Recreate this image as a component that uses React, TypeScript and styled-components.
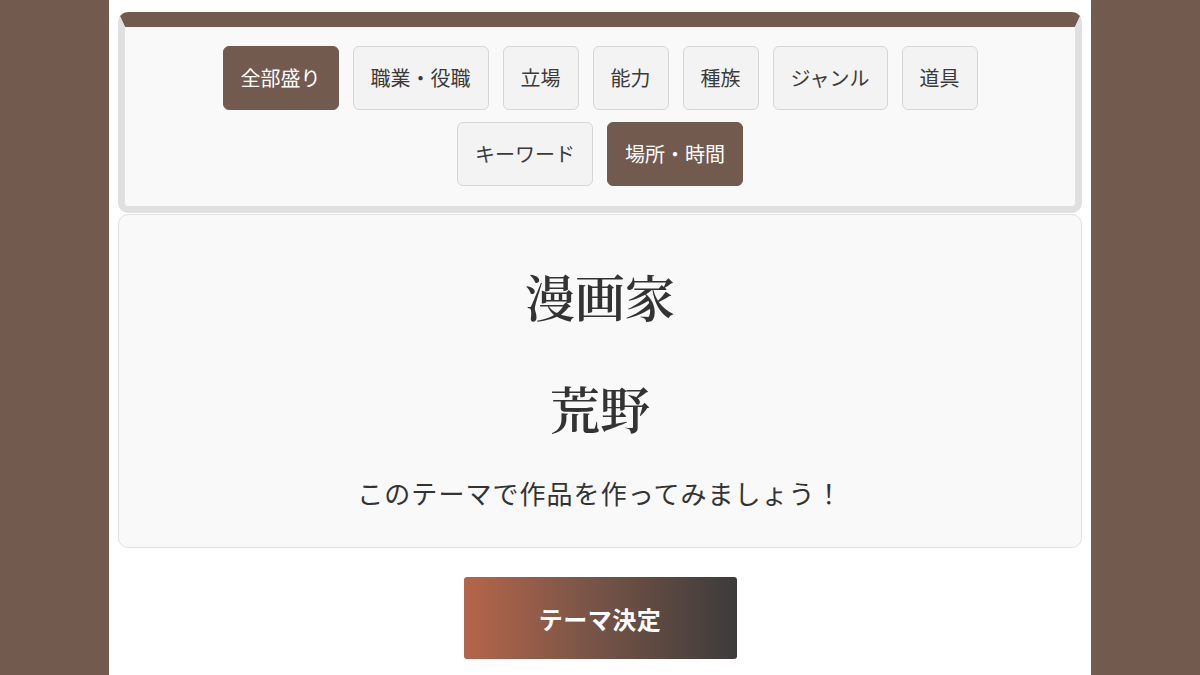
import React, { useState } from "react";
import styled, { createGlobalStyle, css } from "styled-components";

const GlobalStyle = createGlobalStyle`
  html, body {
    margin: 0;
    padding: 0;
    background: #725a4f;
  }
  body {
    font-family: "Noto Sans CJK JP", "Noto Sans", sans-serif;
    color: #333;
  }
`;

const Page = styled.div`
  display: flex;
  justify-content: center;
  min-height: 675px;
`;

const Column = styled.main`
  width: 982px;
  min-height: 675px;
  background: #ffffff;
  box-sizing: border-box;
  padding: 12px 9px 20px;
  display: flex;
  flex-direction: column;
  align-items: stretch;
`;

const FilterPanel = styled.section`
  background: #f9f9f9;
  border: 7px solid #e0e0e0;
  border-top: 15px solid #725a4f;
  border-radius: 10px;
  padding: 19px 60px 20px;
  display: flex;
  flex-wrap: wrap;
  justify-content: center;
  gap: 12px 14px;
`;

const FilterButton = styled.button<{ $active?: boolean }>`
  font-family: "Noto Sans CJK JP", sans-serif;
  font-size: 20px;
  line-height: 30px;
  padding: 16px 17px;
  border-radius: 6px;
  border: 1px solid #d6d6d6;
  background: #f3f3f3;
  color: #3a3a3a;
  cursor: pointer;
  ${(p) =>
    p.$active &&
    css`
      background: #725a4f;
      border-color: #725a4f;
      color: #ffffff;
    `}
`;

const ThemeCard = styled.section`
  margin-top: 1px;
  background: #f9f9f9;
  border: 1px solid #e2e2e2;
  border-radius: 10px;
  padding: 50px 20px 36px;
  display: flex;
  flex-direction: column;
  align-items: center;
`;

const ThemeWord = styled.div`
  font-family: "Noto Serif CJK JP", "Liberation Serif", serif;
  font-size: 50px;
  line-height: 1.2;
  color: #333;
  font-weight: 600;
`;

const SecondWord = styled(ThemeWord)`
  margin-top: 52px;
`;

const Prompt = styled.p`
  margin: 38px 0 0;
  font-size: 26px;
  line-height: 1.4;
  letter-spacing: 0.04em;
  color: #333;
`;

const DecideRow = styled.div`
  display: flex;
  justify-content: center;
  margin-top: 29px;
`;

const DecideButton = styled.button`
  width: 273px;
  height: 82px;
  border: none;
  border-radius: 3px;
  background: linear-gradient(to right, #b5654a 0%, #7a5547 45%, #3c3b3b 100%);
  color: #ffffff;
  font-family: "Noto Sans CJK JP", sans-serif;
  font-weight: 700;
  font-size: 24px;
  letter-spacing: 0.02em;
  cursor: pointer;
`;

const categories = [
  "全部盛り",
  "職業・役職",
  "立場",
  "能力",
  "種族",
  "ジャンル",
  "道具",
  "キーワード",
  "場所・時間",
];

export default function App() {
  const [active] = useState<string[]>(["全部盛り", "場所・時間"]);
  return (
    <>
      <GlobalStyle />
      <Page>
        <Column>
          <FilterPanel>
            {categories.map((c) => (
              <FilterButton key={c} $active={active.includes(c)}>
                {c}
              </FilterButton>
            ))}
          </FilterPanel>
          <ThemeCard>
            <ThemeWord>漫画家</ThemeWord>
            <SecondWord>荒野</SecondWord>
            <Prompt>このテーマで作品を作ってみましょう！</Prompt>
          </ThemeCard>
          <DecideRow>
            <DecideButton>テーマ決定</DecideButton>
          </DecideRow>
        </Column>
      </Page>
    </>
  );
}
